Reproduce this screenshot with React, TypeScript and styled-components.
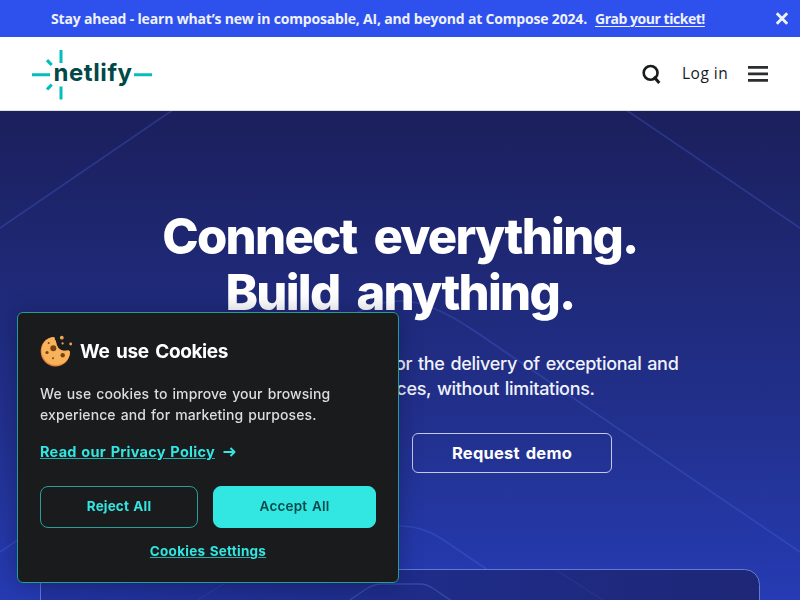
import React from 'react';
import styled, { createGlobalStyle, css } from 'styled-components';

const GlobalStyle = createGlobalStyle`
  * { box-sizing: border-box; }
  html, body { margin: 0; height: 600px; overflow: hidden; }
  body { font-family: Inter, sans-serif; }
  h1, h2, p { margin: 0; }
  button { font-family: inherit; margin: 0; padding: 0; background: none; border: 0; }
  svg { display: block; flex: none; }
`;

const Page = styled.div`
  width: 800px;
  height: 600px;
  overflow: hidden;
  display: flex;
  flex-direction: column;
`;

const Banner = styled.div`
  height: 37px;
  flex: none;
  background: #2e51ed;
  color: #eff2fd;
  display: flex;
  align-items: center;
  padding: 0 12px 0 51px;
`;

const BannerText = styled.p`
  font: 700 14px/20px 'Open Sans', sans-serif;
  letter-spacing: -0.18px;
  white-space: nowrap;
`;

const BannerLink = styled.a`
  font: 700 14px/20px 'Open Sans', sans-serif;
  letter-spacing: -0.47px;
  white-space: nowrap;
  margin-left: 8px;
  text-decoration: underline;
  text-underline-offset: 2px;
  text-decoration-thickness: 1px;
  flex: 1;
`;

const Header = styled.header`
  height: 74px;
  flex: none;
  background: #fff;
  border-bottom: 1px solid #dbe0e2;
  display: flex;
  align-items: center;
  justify-content: space-between;
  padding: 0 32px;
`;

const Actions = styled.nav`
  display: flex;
  align-items: center;
`;

const Login = styled.a`
  font: 500 15.5px/20px 'Open Sans', sans-serif;
  letter-spacing: 0.5px;
  color: #181a1c;
  width: 46px;
  white-space: nowrap;
  margin: -2px 20px 0 21px;
`;

const Hero = styled.main`
  position: relative;
  flex: 1;
  background: linear-gradient(180deg, #1b1f5c 0%, #1f2a7a 38%, #22318f 66%, #263bb4 100%);
  display: flex;
  flex-direction: column;
  align-items: center;
  color: #fff;
`;

const Backdrop = styled.svg`
  position: absolute;
  inset: 0;
`;

const Title = styled.h1`
  position: relative;
  margin-top: 98px;
  font-weight: 800;
  font-size: 49px;
  line-height: 56px;
  letter-spacing: -1.75px;
  word-spacing: 8px;
  text-align: center;
  white-space: nowrap;
`;

const Lead = styled.p`
  position: relative;
  margin-top: 30px;
  font-size: 18px;
  font-weight: 500;
  line-height: 25px;
  letter-spacing: -0.3px;
  word-spacing: 1.3px;
  text-align: center;
  white-space: nowrap;
  color: #f0f2fb;
`;

const HeroButtons = styled.div`
  position: relative;
  display: flex;
  gap: 24px;
  margin-top: 32px;
`;

const HeroButton = styled.button<{ $filled?: boolean }>`
  width: 200px;
  height: 40px;
  border-radius: 6px;
  border: 1px solid #c3c9e8;
  font-weight: 700;
  font-size: 16.5px;
  letter-spacing: 0.2px;
  word-spacing: 2px;
  color: #fff;
  ${(p) => p.$filled && css`
    background: #32e6e2;
    border-color: #32e6e2;
    color: #014847;
  `}
`;

const Dialog = styled.section`
  position: fixed;
  left: 17px;
  top: 312px;
  width: 382px;
  height: 271px;
  padding: 21px 22px 0;
  border: 1px solid #259d8f;
  border-radius: 6px;
  background: #1a1b1d;
  box-shadow: 0 2px 22px rgba(10, 12, 40, 0.35);
`;

const DialogHead = styled.div`
  display: flex;
  align-items: center;
  gap: 7px;
  height: 34px;
`;

const DialogTitle = styled.h2`
  padding-top: 2px;
  font-size: 19px;
  line-height: 30px;
  font-weight: 700;
  color: #fff;
  letter-spacing: -0.38px;
  word-spacing: 2.5px;
  white-space: nowrap;
`;

const DialogText = styled.p`
  margin-top: 15px;
  font-size: 14px;
  font-weight: 500;
  letter-spacing: 0.1px;
  word-spacing: 1.2px;
  line-height: 21px;
  color: #dcdddd;
  white-space: nowrap;
`;

const PolicyRow = styled.div`
  display: flex;
  align-items: center;
  gap: 8px;
  margin-top: 17px;
  height: 20px;
  color: #32e6e2;
`;

const TextLink = styled.a<{ $size: number; $spacing: number }>`
  font-weight: 700;
  font-size: ${(p) => p.$size}px;
  line-height: 20px;
  letter-spacing: ${(p) => p.$spacing}px;
  word-spacing: 1px;
  color: #32e6e2;
  white-space: nowrap;
  text-decoration: underline;
  text-decoration-color: rgba(50, 230, 226, 0.7);
  text-decoration-thickness: 1px;
  text-underline-offset: 1px;
`;

const Choices = styled.div`
  display: grid;
  grid-template-columns: 158px 163px;
  gap: 15px;
  margin-top: 24px;
`;

const Choice = styled.button<{ $filled?: boolean }>`
  height: 42px;
  padding-bottom: 2px;
  border-radius: 8px;
  border: 1px solid ${(p) => (p.$filled ? '#32e6e2' : '#26a09c')};
  background: ${(p) => (p.$filled ? '#32e6e2' : 'transparent')};
  color: ${(p) => (p.$filled ? '#0b4a4b' : '#32e6e2')};
  font-weight: ${(p) => (p.$filled ? 600 : 700)};
  font-size: 13.5px;
  letter-spacing: ${(p) => (p.$filled ? 0.2 : 0.15)}px;
  word-spacing: 1px;
`;

const Settings = styled.div`
  display: flex;
  justify-content: center;
  margin-top: 13px;
`;

const Logo = () => (
  <svg width="122" height="52" viewBox="0 0 122 52">
    <g stroke="#05bdba" strokeWidth="3" fill="none">
      <path d="M0 26.7H18M102 26.7H120M29 2V15M29 38.5V51.5" />
      <path d="M15 12.2L19.7 17M15 41.5L19.7 36.7" strokeWidth="3.2" />
    </g>
    <text x="21.5" y="33" fontFamily="Inter, sans-serif" fontSize="24" fontWeight="700" fill="#014847" textLength="78.5" lengthAdjust="spacing">netlify</text>
  </svg>
);

const SearchIcon = () => (
  <svg width="19" height="20" viewBox="0 0 19 20" fill="none" stroke="#181a1c" strokeWidth="2.6">
    <circle cx="8.6" cy="8.9" r="6.9" />
    <path d="M11.900 12.800L17.300 18.900" strokeWidth="3" />
  </svg>
);

const MenuIcon = () => (
  <svg width="20" height="18" viewBox="0 0 20 18" fill="#2b2d2f">
    <path d="M0 .9H20V3.700H0ZM0 7.500H20V10.300H0ZM0 14H20V16.800H0Z" />
  </svg>
);

const CloseIcon = () => (
  <svg width="12" height="13" viewBox="0 0 12 13" stroke="#eff2fd" strokeWidth="2.8">
    <path d="M.8 1.300L11.200 11.700M11.200 1.300L.8 11.700" />
  </svg>
);

const CookieIcon = () => (
  <svg width="33" height="34" viewBox="0 0 33 34">
    <path d="M14 3C5 3.500 .5 10.500 .7 18C1 26 7.500 32.500 15.500 32.500C23 32.500 29.500 27 30 18.500C29.800 16.500 28.500 16.200 26 16.800C22 17.300 18.500 15 17.300 12C16 10 16.500 8 15.500 6.500C14.300 5.200 15 4 14 3Z" fill="#e8833a" />
    <path d="M14 3C5.500 3.500 1.400 10.500 1.700 17.500C2 25 8.500 31 16 31C23.500 31 29.500 26 30 18.500C29.800 16.500 28.500 16.200 26 16.800C22 17.300 18.500 15 17.300 12C16 10 16.500 8 15.500 6.500C14.300 5.200 15 4 14 3Z" fill="#f9b25c" />
    <g fill="#77430f">
      <circle cx="13.300" cy="14.300" r="3" />
      <circle cx="22.700" cy="21.200" r="2.200" />
      <circle cx="7" cy="18.500" r="1.600" />
      <circle cx="13" cy="24.300" r="1" />
      <circle cx="8.700" cy="9" r="1" />
    </g>
    <g fill="#f2a551">
      <circle cx="21.800" cy="3.700" r="1.900" />
      <circle cx="30.700" cy="10" r="1.400" />
      <circle cx="22.600" cy="9.400" r="1.100" />
    </g>
  </svg>
);

const ArrowIcon = () => (
  <svg width="13" height="10" viewBox="0 0 13 10" fill="none" stroke="#32e6e2" strokeWidth="1.9">
    <path d="M.5 5H11.500M7.500 1L11.500 5L7.500 9" strokeLinejoin="round" />
  </svg>
);

const HeroLines = () => (
  <Backdrop width="800" height="489" viewBox="0 111 800 489" fill="none">
    <g stroke="#4c6ee8" strokeOpacity="0.29" strokeWidth="1.7">
      <path d="M172 110.500L0 228M627 110.500L800 228" />
      <path d="M0 552L327 330Q370 301 400 301Q430 301 473 330L800 552" />
      <path d="M300 580L358 540Q380 526 400 526Q422 526 442 539L487 569.500" />
    </g>
    <defs>
      <linearGradient id="card" x1="0" y1="0" x2="1" y2="0">
        <stop offset="0" stopColor="#2233a0" />
        <stop offset=".5" stopColor="#1f2d8a" />
        <stop offset="1" stopColor="#1e2777" />
      </linearGradient>
    </defs>
    <rect x="40.500" y="569.500" width="719" height="80" rx="15" fill="url(#card)" stroke="#6f86e0" strokeOpacity=".85" />
    <g stroke="#5f7ce8" strokeWidth="1.3">
      <path d="M350 600L366 589Q374 584 382 584H420Q427 584 434 589L451 600.500" strokeOpacity=".36" />
      <path d="M556 570L603 600M245 570L198 600" strokeOpacity=".13" />
    </g>
  </Backdrop>
);

export default function App() {
  return (
    <>
      <GlobalStyle />
      <Page>
        <Banner>
          <BannerText>Stay ahead - learn what’s new in composable, AI, and beyond at Compose 2024.</BannerText>
          <BannerLink>Grab your ticket!</BannerLink>
          <CloseIcon />
        </Banner>
        <Header>
          <Logo />
          <Actions>
            <SearchIcon />
            <Login>Log in</Login>
            <MenuIcon />
          </Actions>
        </Header>
        <Hero>
          <HeroLines />
          <Title>Connect everything.<br />Build anything.</Title>
          <Lead>
            Netlify is the essential platform for the delivery of exceptional and
            <br />
            dynamic web experiences, without limitations.
          </Lead>
          <HeroButtons>
            <HeroButton $filled>Get started</HeroButton>
            <HeroButton>Request demo</HeroButton>
          </HeroButtons>
        </Hero>
      </Page>
      <Dialog>
        <DialogHead>
          <CookieIcon />
          <DialogTitle>We use Cookies</DialogTitle>
        </DialogHead>
        <DialogText>
          We use cookies to improve your browsing
          <br />
          experience and for marketing purposes.
        </DialogText>
        <PolicyRow>
          <TextLink $size={14.5} $spacing={0.25}>Read our Privacy Policy</TextLink>
          <ArrowIcon />
        </PolicyRow>
        <Choices>
          <Choice>Reject All</Choice>
          <Choice $filled>Accept All</Choice>
        </Choices>
        <Settings>
          <TextLink $size={13.5} $spacing={0.25}>Cookies Settings</TextLink>
        </Settings>
      </Dialog>
    </>
  );
}
